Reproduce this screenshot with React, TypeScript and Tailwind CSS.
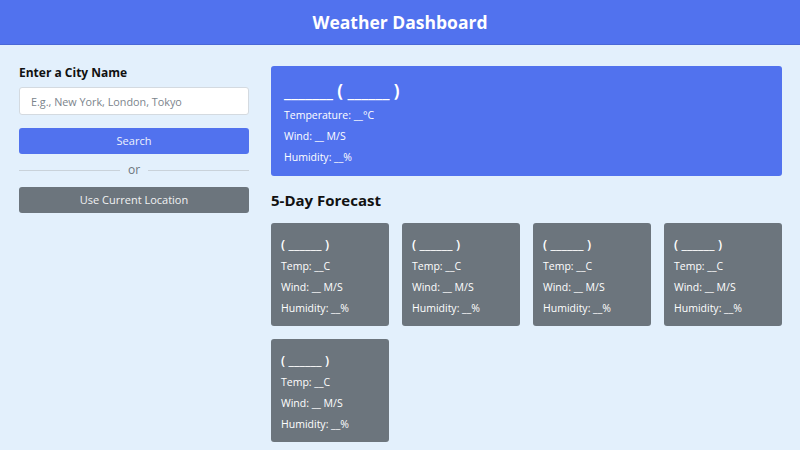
import React from 'react';

const font = { fontFamily: '"Open Sans", "Noto Sans", sans-serif' };

const ForecastCard: React.FC = () => (
  <div className="bg-[#6c757d] text-white rounded-[3px] px-[10px] pt-[10px] pb-[7px]">
    <div className="text-[13px] font-semibold leading-[23px]">( ______ )</div>
    <div className="text-[10.5px] leading-[21px]">Temp: __C</div>
    <div className="text-[10.5px] leading-[21px]">Wind: __ M/S</div>
    <div className="text-[10.5px] leading-[21px]">Humidity: __%</div>
  </div>
);

export default function App() {
  return (
    <div className="min-h-[450px] bg-[#e3f0fc]" style={font}>
      {/* Header */}
      <header className="h-[45px] bg-[#5172ee] border-b border-[#4a68d6] flex items-center justify-center">
        <h1 className="text-white text-[17.5px] font-bold">Weather Dashboard</h1>
      </header>

      <main className="flex gap-[22px] pl-[19px] pr-[18px] pt-[21px]">
        {/* Search column */}
        <aside className="w-[230px] shrink-0">
          <h2 className="text-[12px] font-bold leading-[14px] text-[#111] mb-[7px]">Enter a City Name</h2>
          <input
            type="text"
            placeholder="E.g., New York, London, Tokyo"
            className="w-full h-[28px] bg-white border border-[#d4dae0] rounded-[3px] px-[11px] text-[10.8px] outline-none placeholder:text-[#7b848c]"
          />
          <button className="mt-[13px] w-full h-[26px] bg-[#5172ee] text-[#eef1fd] text-[11px] rounded-[3px]">
            Search
          </button>
          <div className="h-[16px] flex items-center gap-[8px] my-[8px]">
            <div className="flex-1 h-px bg-[#c9d2da]" />
            <span className="text-[12px] text-[#6c757d] leading-none">or</span>
            <div className="flex-1 h-px bg-[#c9d2da]" />
          </div>
          <button className="w-full h-[26px] bg-[#6c757d] text-[#f1f2f3] text-[11px] rounded-[3px]">
            Use Current Location
          </button>
        </aside>

        {/* Weather column */}
        <section className="flex-1">
          <div className="bg-[#5172ee] text-white rounded-[3px] px-[13px] pt-[13px] pb-[8px]">
            <div className="text-[17px] font-bold leading-[24px]">_______ ( ______ )</div>
            <div className="text-[10.5px] leading-[21px] pt-[2px]">Temperature: __°C</div>
            <div className="text-[10.5px] leading-[21px]">Wind: __ M/S</div>
            <div className="text-[10.5px] leading-[21px]">Humidity: __%</div>
          </div>

          <h2 className="mt-[14px] mb-[13px] text-[15px] font-bold leading-[20px] text-[#111]">5-Day Forecast</h2>

          <div className="grid grid-cols-4 gap-[13px]">
            <ForecastCard />
            <ForecastCard />
            <ForecastCard />
            <ForecastCard />
            <ForecastCard />
          </div>
        </section>
      </main>
    </div>
  );
}
